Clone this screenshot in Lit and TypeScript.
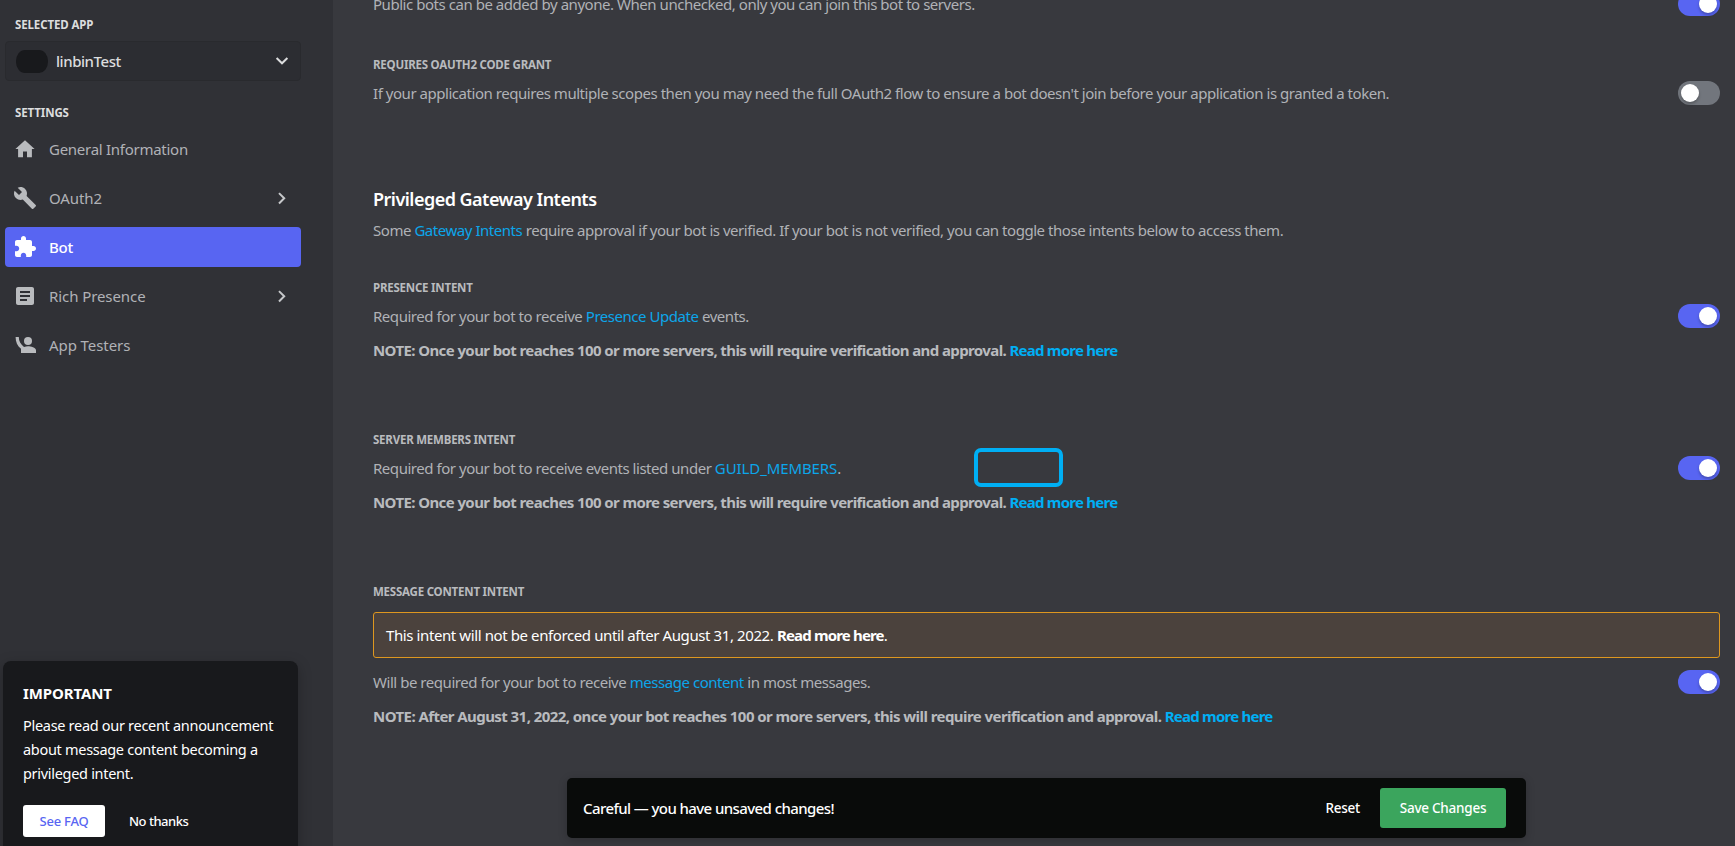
import { LitElement, html, css, svg, TemplateResult } from "lit";
import { customElement, property } from "lit/decorators.js";
import { classMap } from "lit/directives/class-map.js";

const icons: Record<string, TemplateResult> = {
  home: svg`<path d="M2.4 12.100 12 3.200 21.600 12.100h-2.700v8.100h-4.900v-5.800h-4V20.200H5.100v-8.100z"/>`,
  wrench: svg`<path d="M22.7 19l-9.1-9.1c.9-2.3.4-5-1.5-6.9-2-2-5-2.4-7.4-1.3L9 6 6 9 1.6 4.7C.4 7.1.9 10.1 2.9 12.1c1.9 1.9 4.6 2.4 6.9 1.5l9.1 9.1c.4.4 1 .4 1.4 0l2.3-2.3c.5-.4.5-1.1.1-1.4z"/>`,
  puzzle: svg`<path d="M20.5 11H19V7c0-1.1-.9-2-2-2h-4V3.5C13 2.12 11.88 1 10.5 1S8 2.12 8 3.5V5H4c-1.1 0-1.99.9-1.99 2v3.8H3.5c1.49 0 2.7 1.21 2.7 2.7s-1.21 2.7-2.7 2.7H2V20c0 1.1.9 2 2 2h3.8v-1.5c0-1.49 1.21-2.7 2.7-2.7 1.49 0 2.7 1.21 2.7 2.7V22H17c1.1 0 2-.9 2-2v-4h1.5c1.38 0 2.5-1.12 2.5-2.5S21.88 11 20.5 11z"/>`,
  article: svg`<path d="M19 3H5c-1.1 0-2 .9-2 2v14c0 1.1.9 2 2 2h14c1.1 0 2-.9 2-2V5c0-1.1-.9-2-2-2zm-5 14H7v-2h7v2zm3-4H7v-2h10v2zm0-4H7V7h10v2z"/>`,
  person: svg`<circle cx="15" cy="8" r="4"/><path d="M2.600 4h3.200c0 4.200 1.800 7.200 5.200 9.900 1.400-.5 2.800-.700 4-.700 2.700 0 8 1.300 8 4v2.800H8v-4.200C4.400 13 2.600 9 2.600 4z"/>`,
};

@customElement("app-switch")
class AppSwitch extends LitElement {
  @property({ type: Boolean }) on = false;
  static styles = css`
    :host { display: block; flex: none; }
    .track { box-sizing: border-box; width: 42px; height: 24px; padding: 3px; border-radius: 12px; background: #72767d; display: flex; }
    .track.on { background: #5865f2; justify-content: flex-end; }
    .knob { width: 18px; height: 18px; border-radius: 50%; background: #fff; box-shadow: 0 2px 3px rgba(0, 0, 0, 0.25); }
  `;
  render() {
    return html`<div class=${classMap({ track: true, on: this.on })}><div class="knob"></div></div>`;
  }
}

@customElement("app-nav-item")
class AppNavItem extends LitElement {
  @property() icon = "";
  @property() label = "";
  @property({ type: Boolean }) active = false;
  @property({ type: Boolean }) expandable = false;
  @property({ type: Boolean }) tight = false;
  static styles = css`
    :host { display: block; }
    .item { box-sizing: border-box; height: 40px; padding: 0 14px 0 8px; display: flex; align-items: center; border-radius: 4px; color: #b0b2b6; font-size: 15px; letter-spacing: -0.08px; }
    .item.tight { letter-spacing: -0.27px; }
    .item.active { background: #5865f2; color: #fff; font-weight: 500; letter-spacing: -0.3px; }
    .icon { width: 24px; height: 24px; fill: #b9bbbe; }
    .active .icon { fill: #fff; }
    .label { flex: 1; margin-left: 12px; }
    .arrow { width: 10px; height: 14px; fill: none; stroke: #c6c8cb; stroke-width: 2; }
  `;
  render() {
    return html`<div class=${classMap({ item: true, active: this.active, tight: this.tight })}>
      <svg class="icon" viewBox="0 0 24 24">${icons[this.icon]}</svg>
      <span class="label">${this.label}</span>
      ${this.expandable ? html`<svg class="arrow" viewBox="0 0 10 14"><path d="M2 2.100 7.200 7.300 2 12.500"/></svg>` : ""}
    </div>`;
  }
}

@customElement("app-root")
class AppRoot extends LitElement {
  static styles = css`
    :host { display: block; font-family: "Noto Sans", "Open Sans", sans-serif; }
    .page { position: relative; display: flex; width: 100%; height: 846px; overflow: hidden; background: #38393e; white-space: nowrap; }
    .sidebar { box-sizing: border-box; width: 333px; flex: none; padding: 17px 32px 0 5px; background: #303136; display: flex; flex-direction: column; }
    .caption { margin-left: 10px; font-size: 11.5px; line-height: 16px; font-weight: 700; letter-spacing: -0.12px; color: #dcddde; }
    .select { box-sizing: border-box; height: 40px; margin: 8px 0 24px; padding: 0 11px 0 10px; display: flex; align-items: center; background: #2c2d32; border: 1px solid #292a2e; border-radius: 4px; }
    .avatar { width: 32px; height: 23px; border-radius: 9px / 11px; background: #18191c; }
    .app-name { flex: 1; margin-left: 8px; font-size: 15px; font-weight: 500; letter-spacing: -0.45px; color: #dcddde; }
    .caret { width: 14px; height: 10px; fill: none; stroke: #dcddde; stroke-width: 2; }
    .nav { margin-top: 8px; display: flex; flex-direction: column; gap: 9px; }
    .content { flex: 1; min-width: 0; padding: 0 15px 0 40px; }
    .row { height: 24px; display: flex; align-items: center; justify-content: space-between; }
    .row.first { margin-top: -8px; }
    .text { font-size: 15px; line-height: 20px; letter-spacing: -0.459px; color: #b0b2b6; }
    .head { margin-bottom: 8px; font-size: 11.5px; line-height: 16px; font-weight: 700; letter-spacing: -0.22px; color: #b9bbbe; }
    .oauth { margin-top: 41px; }
    .title { margin: 82px 0 9px; font-size: 18px; line-height: 24px; font-weight: 600; letter-spacing: -0.52px; color: #fff; }
    .intent { margin-top: 72px; }
    .intent.lead { margin-top: 40px; }
    .note { margin-top: 12px; font-size: 15px; line-height: 20px; font-weight: 700; letter-spacing: -0.6px; color: #b9bbbe; }
    .note.dated { letter-spacing: -0.565px; }
    .link { color: #0ca6ea; }
    .link.constant { letter-spacing: -0.1px; }
    .note .link { color: #00aff4; letter-spacing: -0.76px; }
    .alert { box-sizing: border-box; height: 46px; margin: 12px 0; padding: 0 12px; display: flex; align-items: center; border: 1px solid #de971f; border-radius: 3px; background: #4b423d; font-size: 15px; letter-spacing: -0.4px; color: #fff; }
    .alert b { font-weight: 700; letter-spacing: -0.83px; }
    .frame { position: absolute; left: 974px; top: 448px; box-sizing: border-box; width: 89px; height: 39px; border: 4px solid #00aff4; border-radius: 7px; }
    .card { position: absolute; left: 3px; top: 661px; box-sizing: border-box; width: 295px; height: 200px; padding: 20px; border-radius: 8px; background: #18191c; box-shadow: 0 4px 14px rgba(0, 0, 0, 0.25); color: #fff; }
    .card-title { font-size: 15px; line-height: 24px; font-weight: 700; letter-spacing: -0.12px; }
    .card-text { margin-top: 8px; font-size: 14.5px; line-height: 24px; letter-spacing: -0.3px; }
    .actions { margin-top: 20px; display: flex; align-items: center; font-size: 13px; font-weight: 500; }
    .faq { width: 82px; height: 32px; display: flex; align-items: center; justify-content: center; border-radius: 3px; background: #fff; color: #5865f2; letter-spacing: -0.2px; }
    .no { margin-left: 24px; letter-spacing: -0.5px; }
    .savebar { position: absolute; left: 567px; top: 778px; box-sizing: border-box; width: 959px; height: 60px; padding: 0 20px 0 16px; display: flex; align-items: center; border-radius: 5px; background: #090b0a; box-shadow: 0 2px 10px rgba(0, 0, 0, 0.2); color: #fff; font-weight: 500; }
    .warning { flex: 1; font-size: 15px; letter-spacing: -0.59px; }
    .reset { font-size: 13.5px; letter-spacing: -0.25px; }
    .save { width: 126px; height: 40px; margin-left: 20px; display: flex; align-items: center; justify-content: center; border-radius: 3px; background: #3ba55d; font-size: 13.5px; letter-spacing: -0.25px; }
  `;

  render() {
    return html`<div class="page">
      <div class="sidebar">
        <div class="caption">SELECTED APP</div>
        <div class="select">
          <div class="avatar"></div>
          <div class="app-name">linbinTest</div>
          <svg class="caret" viewBox="0 0 14 10"><path d="M1.600 2 7 7.300 12.400 2"/></svg>
        </div>
        <div class="caption">SETTINGS</div>
        <div class="nav">
          <app-nav-item icon="home" label="General Information" tight></app-nav-item>
          <app-nav-item icon="wrench" label="OAuth2" expandable></app-nav-item>
          <app-nav-item icon="puzzle" label="Bot" active></app-nav-item>
          <app-nav-item icon="article" label="Rich Presence" expandable></app-nav-item>
          <app-nav-item icon="person" label="App Testers"></app-nav-item>
        </div>
      </div>
      <div class="content">
        <div class="row first">
          <div class="text">Public bots can be added by anyone. When unchecked, only you can join this bot to servers.</div>
          <app-switch on></app-switch>
        </div>
        <div class="oauth">
          <div class="head">REQUIRES OAUTH2 CODE GRANT</div>
          <div class="row">
            <div class="text">If your application requires multiple scopes then you may need the full OAuth2 flow to ensure a bot doesn't join before your application is granted a token.</div>
            <app-switch></app-switch>
          </div>
        </div>
        <div class="title">Privileged Gateway Intents</div>
        <div class="text">Some <span class="link">Gateway Intents</span> require approval if your bot is verified. If your bot is not verified, you can toggle those intents below to access them.</div>
        <div class="intent lead">
          <div class="head">PRESENCE INTENT</div>
          <div class="row">
            <div class="text">Required for your bot to receive <span class="link">Presence Update</span> events.</div>
            <app-switch on></app-switch>
          </div>
          <div class="note">NOTE: Once your bot reaches 100 or more servers, this will require verification and approval. <span class="link">Read more here</span></div>
        </div>
        <div class="intent">
          <div class="head">SERVER MEMBERS INTENT</div>
          <div class="row">
            <div class="text">Required for your bot to receive events listed under <span class="link constant">GUILD_MEMBERS</span>.</div>
            <app-switch on></app-switch>
          </div>
          <div class="note">NOTE: Once your bot reaches 100 or more servers, this will require verification and approval. <span class="link">Read more here</span></div>
        </div>
        <div class="intent">
          <div class="head">MESSAGE CONTENT INTENT</div>
          <div class="alert"><span>This intent will not be enforced until after August 31, 2022. <b>Read more here</b>.</span></div>
          <div class="row">
            <div class="text">Will be required for your bot to receive <span class="link">message content</span> in most messages.</div>
            <app-switch on></app-switch>
          </div>
          <div class="note dated">NOTE: After August 31, 2022, once your bot reaches 100 or more servers, this will require verification and approval. <span class="link">Read more here</span></div>
        </div>
      </div>
      <div class="frame"></div>
      <div class="card">
        <div class="card-title">IMPORTANT</div>
        <div class="card-text">Please read our recent announcement<br>about message content becoming a<br>privileged intent.</div>
        <div class="actions"><div class="faq">See FAQ</div><div class="no">No thanks</div></div>
      </div>
      <div class="savebar">
        <div class="warning">Careful — you have unsaved changes!</div>
        <div class="reset">Reset</div>
        <div class="save">Save Changes</div>
      </div>
    </div>`;
  }
}
